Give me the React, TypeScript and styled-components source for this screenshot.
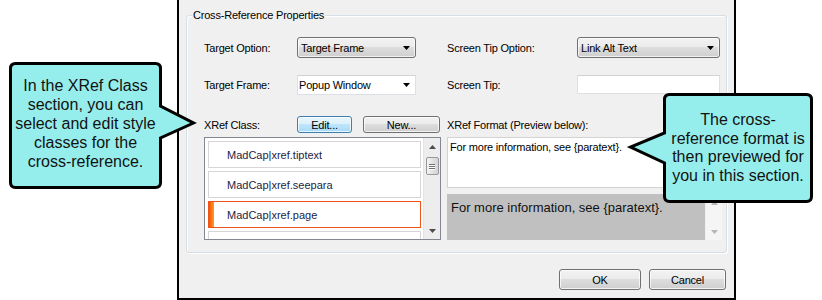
import React from 'react';
import styled, { createGlobalStyle, css } from 'styled-components';

const GlobalStyle = createGlobalStyle`
  html, body {
    margin: 0;
    padding: 0;
    background: #ffffff;
  }
  body {
    font-family: "Liberation Sans", Arial, sans-serif;
  }
`;

const Stage = styled.div`
  position: relative;
  width: 822px;
  height: 300px;
  overflow: hidden;
  box-sizing: border-box;
  padding-left: 177px;
`;

const Dialog = styled.div`
  width: 559px;
  height: 300px;
  box-sizing: border-box;
  background: #f0f0f0;
  border: 2px solid #000;
  border-top: none;
  padding: 15px 7px 0;
  display: flex;
  flex-direction: column;
  font-size: 11px;
  letter-spacing: -0.2px;
  color: #000;
`;

const GroupBox = styled.div`
  position: relative;
  height: 238px;
  box-sizing: border-box;
  border: 1px solid #d5dfe5;
  border-radius: 3px;
  box-shadow: inset 1px 1px 0 #fff, 1px 1px 0 #fff;
  padding: 21px 0 0 17px;
`;

const GroupCaption = styled.span`
  position: absolute;
  top: -8px;
  left: 5px;
  padding: 0 1px;
  background: #f0f0f0;
  line-height: 14px;
`;

const FieldGrid = styled.div`
  display: grid;
  grid-template-columns: 93px 150px 130px 143px;
  grid-template-rows: 21px 20px;
  row-gap: 17px;
  align-items: center;
`;

const Label = styled.span<{ $width?: number }>`
  white-space: nowrap;
  line-height: 14px;
  ${p => p.$width && css`width: ${p.$width}px; flex: none;`}
`;

const DropButton = styled.div<{ $width: number }>`
  width: ${p => p.$width}px;
  height: 21px;
  box-sizing: border-box;
  display: flex;
  align-items: center;
  padding: 0 5px 0 3px;
  border: 1px solid #707070;
  border-radius: 3px;
  background: linear-gradient(#f2f2f2 0%, #ebebeb 50%, #dddddd 50%, #cfcfcf 100%);
  box-shadow: inset 0 0 0 1px rgba(255, 255, 255, 0.7);
`;

const ComboField = styled.div<{ $width: number; $height: number }>`
  width: ${p => p.$width}px;
  height: ${p => p.$height}px;
  align-self: start;
  box-sizing: border-box;
  display: flex;
  align-items: center;
  padding: 0 5px 0 1px;
  background: #fff;
  border: 1px solid #dcdfe3;
  border-top-color: #cfd2d6;
`;

const ArrowSlot = styled.span`
  margin-left: auto;
  display: flex;
`;

const Lower = styled.div`
  display: flex;
  gap: 6px;
  margin-top: 21px;
`;

const Column = styled.div<{ $width: number }>`
  width: ${p => p.$width}px;
  display: flex;
  flex-direction: column;
`;

const HeaderRow = styled.div`
  height: 17px;
  display: flex;
  align-items: center;
`;

const Button = styled.div<{ $width: number; $height?: number; $default?: boolean }>`
  width: ${p => p.$width}px;
  height: ${p => p.$height || 17}px;
  box-sizing: border-box;
  flex: none;
  display: flex;
  align-items: center;
  justify-content: center;
  border: 1px solid #707070;
  border-radius: 3px;
  background: linear-gradient(#f2f2f2 0%, #ebebeb 50%, #dddddd 50%, #cfcfcf 100%);
  box-shadow: inset 0 0 0 1px rgba(255, 255, 255, 0.75);
  ${p =>
    p.$default &&
    css`
      border-color: #3c7fb1;
      background: linear-gradient(#eaf6fd 0%, #d9f0fc 50%, #bee6fd 50%, #a7d9f5 100%);
    `}
`;

const ListBox = styled.div`
  margin-top: 4px;
  height: 103px;
  box-sizing: border-box;
  border: 1px solid #828790;
  background: #fff;
  display: flex;
  overflow: hidden;
`;

const ListItems = styled.div`
  flex: 1;
  display: flex;
  flex-direction: column;
  gap: 3px;
  padding: 3px 2px 0 3px;
`;

const ListItem = styled.div<{ $selected?: boolean }>`
  position: relative;
  flex: none;
  height: 27px;
  box-sizing: border-box;
  display: flex;
  align-items: center;
  padding-left: 18px;
  border: 1px solid ${p => (p.$selected ? '#f0521c' : '#d6d6d6')};
  background: #fff;
  font-size: 11px;
  letter-spacing: 0;
  color: #231d46;

  ${p =>
    p.$selected &&
    css`
      &::before {
        content: '';
        position: absolute;
        left: 0;
        top: 0;
        bottom: 0;
        width: 5px;
        background: linear-gradient(to right, #f45400, #ff9a2a);
      }
    `}
`;

const ScrollBar = styled.div<{ $light?: boolean }>`
  width: 17px;
  flex: none;
  display: flex;
  flex-direction: column;
  align-items: center;
  background: ${p => (p.$light ? '#f5f5f5' : '#ededed')};
  border-left: 1px solid ${p => (p.$light ? '#f0f0f0' : '#e4e4e4')};
  box-sizing: border-box;
`;

const ScrollArrowBox = styled.div<{ $bottom?: boolean }>`
  height: 17px;
  width: 100%;
  display: flex;
  align-items: center;
  justify-content: center;
  ${p => p.$bottom && css`margin-top: auto;`}
`;

const Thumb = styled.div`
  margin-top: 2px;
  width: 13px;
  height: 18px;
  box-sizing: border-box;
  border: 1px solid #979797;
  border-radius: 2px;
  background: linear-gradient(to right, #f4f4f4, #e2e2e2 50%, #d4d4d4);
  display: flex;
  flex-direction: column;
  align-items: center;
  justify-content: center;
  gap: 1px;
`;

const Grip = styled.span`
  width: 6px;
  height: 1px;
  background: #6f6f6f;
  box-shadow: 0 1px 0 #fff;
`;

const FormatBox = styled.div`
  margin-top: 4px;
  height: 51px;
  box-sizing: border-box;
  border: 1px solid #d3d3d3;
  background: #fff;
  padding: 3px 2px;
  line-height: 13px;
`;

const PreviewWrap = styled.div`
  margin-top: 6px;
  height: 46px;
  display: flex;
`;

const PreviewArea = styled.div`
  flex: 1;
  background: #c0c0c0;
  padding: 6px 4px 0;
  font-size: 13px;
  letter-spacing: 0;
  line-height: 15px;
  color: #111;
`;

const Footer = styled.div`
  display: flex;
  justify-content: flex-end;
  gap: 8px;
  margin-top: 16px;
  padding-right: 1px;
`;

const Callout = styled.div<{ $left: number; $top: number; $width: number; $height: number }>`
  position: absolute;
  left: ${p => p.$left}px;
  top: ${p => p.$top}px;
  width: ${p => p.$width}px;
  height: ${p => p.$height}px;
  z-index: 5;
`;

const CalloutShape = styled.svg`
  position: absolute;
  inset: 0;
  overflow: visible;
`;

const CalloutText = styled.div<{ $left: number; $top: number; $width: number; $lh: number }>`
  position: absolute;
  left: ${p => p.$left}px;
  top: ${p => p.$top}px;
  width: ${p => p.$width}px;
  text-align: center;
  font-size: 16px;
  line-height: ${p => p.$lh}px;
  color: #121212;
`;

const DownArrow = ({ color = '#000' }: { color?: string }) => (
  <svg width="7" height="4" viewBox="0 0 7 4">
    <path d="M0 0H7L3.5 4Z" fill={color} />
  </svg>
);

const UpArrow = ({ color = '#000' }: { color?: string }) => (
  <svg width="7" height="4" viewBox="0 0 7 4">
    <path d="M0 4H7L3.5 0Z" fill={color} />
  </svg>
);

const classes = ['MadCap|xref.tiptext', 'MadCap|xref.seepara', 'MadCap|xref.page', ''];

export default function App() {
  return (
    <>
      <GlobalStyle />
      <Stage>
        <Dialog>
          <GroupBox>
            <GroupCaption>Cross-Reference Properties</GroupCaption>
            <FieldGrid>
              <Label>Target Option:</Label>
              <DropButton $width={119}>
                Target Frame
                <ArrowSlot>
                  <DownArrow />
                </ArrowSlot>
              </DropButton>
              <Label>Screen Tip Option:</Label>
              <DropButton $width={143}>
                Link Alt Text
                <ArrowSlot>
                  <DownArrow />
                </ArrowSlot>
              </DropButton>

              <Label>Target Frame:</Label>
              <ComboField $width={119} $height={20}>
                Popup Window
                <ArrowSlot>
                  <DownArrow />
                </ArrowSlot>
              </ComboField>
              <Label>Screen Tip:</Label>
              <ComboField $width={143} $height={19} />
            </FieldGrid>

            <Lower>
              <Column $width={237}>
                <HeaderRow>
                  <Label $width={93}>XRef Class:</Label>
                  <Button $width={55} $default>Edit...</Button>
                  <Button $width={77} style={{ marginLeft: 11 }}>New...</Button>
                </HeaderRow>
                <ListBox>
                  <ListItems>
                    {classes.map((c, i) => (
                      <ListItem key={i} $selected={i === 2}>
                        {c}
                      </ListItem>
                    ))}
                  </ListItems>
                  <ScrollBar>
                    <ScrollArrowBox>
                      <UpArrow color="#4d4d4d" />
                    </ScrollArrowBox>
                    <Thumb>
                      <Grip />
                      <Grip />
                      <Grip />
                    </Thumb>
                    <ScrollArrowBox $bottom>
                      <DownArrow color="#4d4d4d" />
                    </ScrollArrowBox>
                  </ScrollBar>
                </ListBox>
              </Column>

              <Column $width={275}>
                <HeaderRow>
                  <Label>XRef Format (Preview below):</Label>
                </HeaderRow>
                <FormatBox>For more information, see {'{paratext}'}.</FormatBox>
                <PreviewWrap>
                  <PreviewArea>For more information, see {'{paratext}'}.</PreviewArea>
                  <ScrollBar $light>
                    <ScrollArrowBox>
                      <UpArrow color="#b5b5b5" />
                    </ScrollArrowBox>
                    <ScrollArrowBox $bottom>
                      <DownArrow color="#b5b5b5" />
                    </ScrollArrowBox>
                  </ScrollBar>
                </PreviewWrap>
              </Column>
            </Lower>
          </GroupBox>

          <Footer>
            <Button $width={82} $height={21}>OK</Button>
            <Button $width={77} $height={21}>Cancel</Button>
          </Footer>
        </Dialog>

        <Callout $left={7} $top={60} $width={193} $height={131}>
          <CalloutShape width="193" height="131">
            <path
              d="M8.5 3.5H148.5Q153.5 3.5 153.5 8.5V46L186.5 63L153.5 78V122.5Q153.5 127.5 148.5 127.5H8.5Q3.5 127.5 3.5 122.5V8.5Q3.5 3.5 8.5 3.5Z"
              fill="#96eeec"
              stroke="#000"
              strokeWidth="3"
            />
          </CalloutShape>
          <CalloutText $left={2} $top={16} $width={153} $lh={19}>
            In the XRef Class
            <br />
            section, you can
            <br />
            select and edit style
            <br />
            classes for the
            <br />
            cross-reference.
          </CalloutText>
        </Callout>

        <Callout $left={620} $top={90} $width={197} $height={116}>
          <CalloutShape width="197" height="116">
            <path
              d="M49.5 4.5H186.5Q191.5 4.5 191.5 9.5V106.5Q191.5 111.5 186.5 111.5H49.5Q44.5 111.5 44.5 106.5V73L10.5 57L44.5 43V9.5Q44.5 4.5 49.5 4.5Z"
              fill="#96eeec"
              stroke="#000"
              strokeWidth="3"
            />
          </CalloutShape>
          <CalloutText $left={43} $top={21} $width={150} $lh={18.7}>
            The cross-
            <br />
            reference format is
            <br />
            then previewed for
            <br />
            you in this section.
          </CalloutText>
        </Callout>
      </Stage>
    </>
  );
}
